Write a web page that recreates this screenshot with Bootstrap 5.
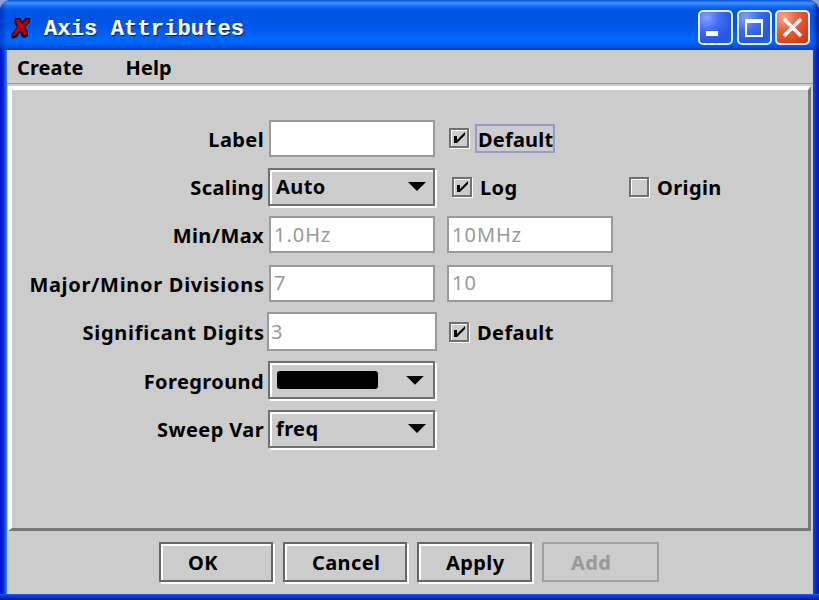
<!DOCTYPE html>
<html lang="en">
<head>
<meta charset="utf-8">
<meta name="viewport" content="width=device-width, initial-scale=1">
<title>Axis Attributes</title>
<link href="https://cdn.jsdelivr.net/npm/bootstrap@5.3.0/dist/css/bootstrap.min.css" rel="stylesheet">
<style>
body{width:819px;height:600px;overflow:hidden;background:#8b9fd0;font-family:"Noto Sans","Open Sans",sans-serif;font-weight:700;font-size:20px;line-height:28px;letter-spacing:.4px;color:#000}
.window{width:819px;height:600px;padding:0 6px 6px 7px;border-radius:11px 11px 0 0;background:linear-gradient(90deg,#0015c4 0,#0026dc 3px,#0d50e8 5px,#4a86e8 7px,#0042dd 8px,#0042e0 814px,#0024b8 817px,#00129a 819px);position:relative}
.window::after{content:"";position:absolute;left:0;right:0;bottom:0;height:6px;background:linear-gradient(#3a6de0 0,#0046e0 1px,#0038d0 3px,#001a9a 5px,#00128c)}
.titlebar{height:50px;margin:0 -6px 0 -7px;padding:4px 9px 0 10px;border-radius:11px 11px 0 0;background:linear-gradient(90deg,rgba(0,20,150,.45) 0,transparent 7px,transparent 812px,rgba(0,10,130,.65) 819px),linear-gradient(#0a52d8 0,#3f94ff 3px,#1a6cf5 6px,#0058e8 10px,#0054e3 18px,#0057e8 27px,#0066fc 38px,#0066ff 43px,#0052e0 47px,#003fc8 50px)}
.title-text{font:700 22px/28px "Liberation Mono",monospace;letter-spacing:.14px;color:#fff;text-shadow:1px 1px 1px #001a78,.4px 0 #fff;margin-left:12px;padding-top:5px}
.winbtns{gap:3.500px}
.winbtn{width:35px;height:35px;border:2px solid #e8eefc;border-radius:5px;padding:0;background:radial-gradient(circle at 22% 18%,#86a2fa 0,#3d6cf0 38%,#2357e0 72%,#1d63f0 100%)}
.winbtn.closer{background:radial-gradient(circle at 22% 18%,#f6a68e 0,#e6623e 38%,#d8421a 75%,#c8370d 100%)}
.winbtn svg{display:block}
.client{height:544px;background:#ccc}
.menus{height:34px;padding:2px 0 0 10px;gap:42px;border-bottom:1px solid #999;letter-spacing:.1px}
.menus a{color:#000;text-decoration:none}
.bevel{height:445px;margin:2px 2px 0 1px;border:4px solid #fff;border-right:3px solid #777;border-bottom:3px solid #777}
.attrs{display:grid;grid-template-columns:252px 183px 181px 1fr;grid-template-rows:repeat(7,48.4px);padding-top:24px}
.tag{justify-content:flex-end;padding-top:3px}
.long{letter-spacing:.7px;margin-right:-.7px}
.slot{padding-left:5px}
.slot.wide{padding-left:4px}
.slot.near{padding-left:3px}
.field{width:166px;height:37px;border:2px solid #999;border-radius:0;background:#fff!important;padding:2px 3px 3px;font:400 20px/28px "Noto Sans",sans-serif;color:#999!important;letter-spacing:1px;box-shadow:none!important}
.field.grown{width:170px;height:39px;padding-left:2px}
.metal{height:39px;border-radius:0;padding:0 0 1px;color:#000;font:inherit;letter-spacing:inherit;background:#ccc;border:2px solid #666;box-shadow:inset 2px 2px 0 #fff,2px 2px 0 #fff;text-align:left}
.combo{width:167px;height:38px;padding:0 7px 0 6px;border-color:#707070}
.combo.tint{padding-left:7px;padding-right:9px}
.tri{width:18px;height:9px;background:#000;clip-path:polygon(0 0,100% 0,50% 100%)}
.swatch{width:101px;height:18px;background:#000;border-radius:3px}
.chk{width:20px;height:20px;border:2px solid #707070;box-shadow:inset 1px 1px 0 #fff,1px 1px 0 #fff;flex:none}
.chk svg{display:block}
.cap{line-height:25px;padding:2px 0 0 1px;margin-left:7px}
.c1{padding-left:2px}
.c2{padding-left:5px}
.c3{padding-left:1px}
.focused{outline:2px solid #99c;line-height:23px;padding:2px 0 0 1px;letter-spacing:.2px;margin-left:8px}
.actions{height:61px;padding:11px 0 0 152px;gap:10px}
.actions .metal{height:40px;padding-top:2px}
.ok{width:114px}
.cancel{width:124px}
.apply{width:115px}
.add{width:117px}
.actions .btn{padding-left:27px}
.metal.off{color:#999;border-color:#a0a0a0;box-shadow:none;opacity:1;background:#ccc}
</style>
</head>
<body>
<div class="window">
  <header class="titlebar d-flex align-items-center">
    <svg width="22" height="24" viewBox="0 0 22 24"><path d="M5 3h5l2 4 3-4h5v4l-5 5 3 5v4l-3 2-3-1-2-5-3 5-5 2-1-4 6-8-3-4z" fill="#230018"/><path d="M6.500 5H9l3 5 5-5h1.500l-5 7 3 6.500-1.500 1.500-4.500-6L5 19.500 3 20l5.500-8z" fill="#c00808" stroke="#a80408" stroke-width="1.4"/></svg>
    <span class="title-text">Axis Attributes</span>
    <div class="winbtns ms-auto d-flex">
      <button class="winbtn" aria-label="Minimize"><svg width="31" height="31"><path d="M6 19h12v5H6z" fill="#fff"/></svg></button>
      <button class="winbtn" aria-label="Maximize"><svg width="31" height="31"><path d="M6 7h18v18H6zM8 11v12h14V11z" fill="#fff" fill-rule="evenodd"/></svg></button>
      <button class="winbtn closer" aria-label="Close"><svg width="31" height="31"><path d="M7 7 24 24M24 7 7 24" stroke="#fff" stroke-width="3.6"/></svg></button>
    </div>
  </header>
  <main class="client">
    <nav class="menus d-flex align-items-center"><a href="#">Create</a><a href="#">Help</a></nav>
    <section class="bevel">
      <div class="attrs">
        <div class="tag d-flex align-items-center"><span>Label</span></div>
        <div class="slot d-flex align-items-center"><input class="form-control field" aria-label="Label"></div>
        <div class="d-flex align-items-center c1"><span class="chk"><svg width="16" height="16"><path d="M3 6h3v4l8-8v3l-8 8H3z"/></svg></span><span class="cap focused">Default</span></div>
        <div></div>

        <div class="tag d-flex align-items-center"><span>Scaling</span></div>
        <div class="slot wide d-flex align-items-center"><button class="btn metal combo d-flex align-items-center justify-content-between"><span>Auto</span><i class="tri"></i></button></div>
        <div class="d-flex align-items-center c2"><span class="chk"><svg width="16" height="16"><path d="M3 6h3v4l8-8v3l-8 8H3z"/></svg></span><span class="cap">Log</span></div>
        <div class="d-flex align-items-center c3"><span class="chk"></span><span class="cap">Origin</span></div>

        <div class="tag d-flex align-items-center"><span>Min/Max</span></div>
        <div class="slot d-flex align-items-center"><input class="form-control field" aria-label="Min" value="1.0Hz" disabled></div>
        <div class="d-flex align-items-center"><input class="form-control field" aria-label="Max" value="10MHz" disabled></div>
        <div></div>

        <div class="tag d-flex align-items-center"><span class="long">Major/Minor Divisions</span></div>
        <div class="slot d-flex align-items-center"><input class="form-control field" aria-label="Major divisions" value="7" disabled></div>
        <div class="d-flex align-items-center"><input class="form-control field" aria-label="Minor divisions" value="10" disabled></div>
        <div></div>

        <div class="tag d-flex align-items-center"><span class="long">Significant Digits</span></div>
        <div class="slot near d-flex align-items-center"><input class="form-control field grown" aria-label="Significant digits" value="3" disabled></div>
        <div class="d-flex align-items-center c1"><span class="chk"><svg width="16" height="16"><path d="M3 6h3v4l8-8v3l-8 8H3z"/></svg></span><span class="cap">Default</span></div>
        <div></div>

        <div class="tag d-flex align-items-center"><span>Foreground</span></div>
        <div class="slot wide d-flex align-items-center"><button class="btn metal combo tint d-flex align-items-center justify-content-between" aria-label="Black"><i class="swatch"></i><i class="tri"></i></button></div>
        <div></div><div></div>

        <div class="tag d-flex align-items-center"><span>Sweep Var</span></div>
        <div class="slot wide d-flex align-items-center"><button class="btn metal combo d-flex align-items-center justify-content-between"><span>freq</span><i class="tri"></i></button></div>
      </div>
    </section>
    <footer class="actions d-flex">
      <button class="btn metal ok">OK</button>
      <button class="btn metal cancel">Cancel</button>
      <button class="btn metal apply">Apply</button>
      <button class="btn metal off add" disabled>Add</button>
    </footer>
  </main>
</div>
<script src="https://cdn.jsdelivr.net/npm/bootstrap@5.3.0/dist/js/bootstrap.bundle.min.js"></script>
</body>
</html>
